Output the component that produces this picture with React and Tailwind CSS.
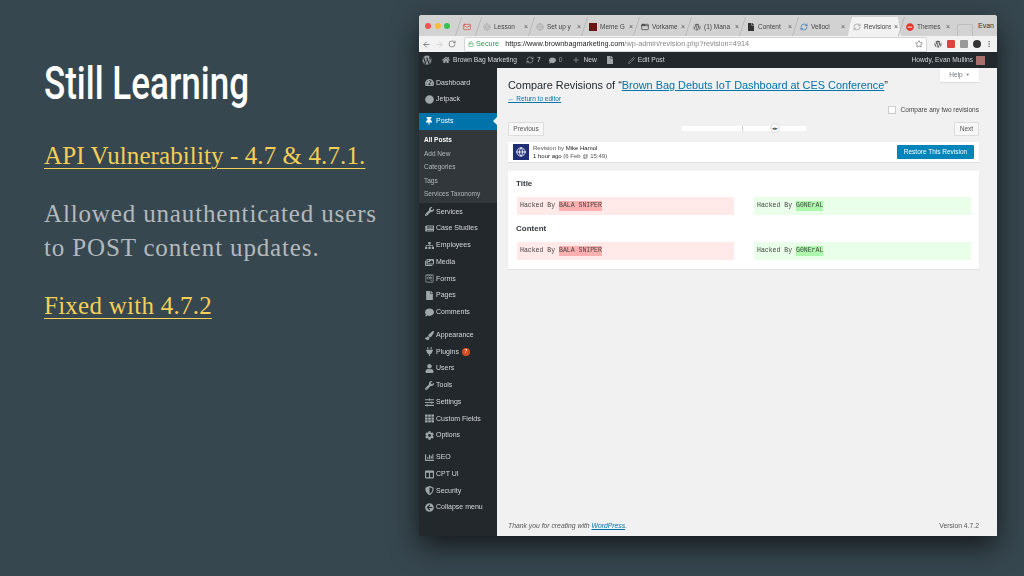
import React from "react";
import { ArrowLeft, ArrowRight, RotateCw, Lock, Star, MoreVertical, Mail, Globe, AppWindow, RefreshCw, Plus, Pencil } from "lucide-react";
import { FaWordpress, FaTachometerAlt, FaThumbtack, FaWrench, FaImages, FaFile, FaComment, FaPaintBrush, FaPlug, FaUser, FaCog, FaHome, FaNewspaper, FaSitemap, FaWpforms, FaSlidersH, FaTh, FaShieldAlt, FaChartBar, FaColumns, FaArrowCircleLeft, FaCircle, FaMinusCircle } from "react-icons/fa";

const tabs = [
  { w: "w-[20px]", color: "text-[#d9453a]", I: Mail },
  { w: "w-[53px]", label: "Lesson", color: "text-[#a9a9a9]", I: Globe },
  { w: "w-[53px]", label: "Set up y", color: "text-[#a9a9a9]", I: Globe },
  { w: "w-[52px]", label: "Meme G", box: true },
  { w: "w-[52px]", label: "Vorkame", color: "text-[#333]", I: AppWindow },
  { w: "w-[54px]", label: "(1) Mana", color: "text-[#666]", I: FaWordpress },
  { w: "w-[53px]", label: "Content", color: "text-[#333]", I: FaFile },
  { w: "w-[53px]", label: "Velloci", color: "text-[#2a6fb5]", I: RefreshCw },
  { w: "w-[53px]", label: "Revisions", color: "text-[#999]", I: RefreshCw, active: true },
  { w: "w-[52px]", label: "Themes", color: "text-[#e5352b]", I: FaMinusCircle },
];

const groups = [
  { mt: "mt-[6.5px]", items: [["Dashboard", FaTachometerAlt], ["Jetpack", FaCircle]] },
  { posts: true },
  { mt: "mt-[0.5px]", items: [["Services", FaWrench], ["Case Studies", FaNewspaper], ["Employees", FaSitemap], ["Media", FaImages], ["Forms", FaWpforms], ["Pages", FaFile], ["Comments", FaComment]] },
  { mt: "mt-[6px]", items: [["Appearance", FaPaintBrush], ["Plugins", FaPlug, true], ["Users", FaUser], ["Tools", FaWrench], ["Settings", FaSlidersH], ["Custom Fields", FaTh], ["Options", FaCog]] },
  { mt: "mt-[5px]", items: [["SEO", FaChartBar], ["CPT UI", FaColumns], ["Security", FaShieldAlt], ["Collapse menu", FaArrowCircleLeft]] },
];

function Row({ label, I, badge }) {
  return (
    <div className="flex h-[16.75px] items-center text-[7px] font-medium text-[#d5d8da]">
      <span className="flex w-[17px] justify-center pl-[3px] text-[#a0a5aa]"><I size={9} /></span>
      <span className="whitespace-nowrap">{label}</span>
      {badge && <span className="ml-[3px] flex h-[8px] w-[8px] items-center justify-center rounded-full bg-[#d54e21] text-[5px] text-white">7</span>}
    </div>
  );
}

function Diff({ add }) {
  return (
    <div className={`flex h-[18px] w-[217px] items-center pl-[3px] font-['Liberation_Mono',monospace] text-[6.5px] text-[#444] ${add ? "bg-[#e9ffe9]" : "bg-[#ffe9e9]"}`}>
      <span>Hacked By&nbsp;</span>
      <span className={add ? "bg-[#adf8ad]" : "bg-[#fdb0b0]"}>{add ? "G0NErAL" : "BALA SNIPER"}</span>
    </div>
  );
}

function Tab({ t }) {
  const I = t.I;
  return (
    <div className={`relative flex h-[19px] shrink-0 items-center gap-[3px] pl-[5px] pr-[3px] ${t.w} ${t.active ? "bg-[#f2f2f2] [clip-path:polygon(0_100%,6%_0,94%_0,100%_100%)]" : ""}`}>
      <span className="absolute left-0 top-0 h-full w-px -skew-x-[18deg] bg-[#b8b8b8]" />
      {t.box ? <span className="h-[8px] w-[8px] shrink-0 bg-[#6b1414]" /> : <I size={8} className={`shrink-0 ${t.color}`} />}
      {t.label && <span className="min-w-0 flex-1 overflow-hidden whitespace-nowrap text-[6.5px] text-[#444]">{t.label}</span>}
      {t.label && <span className="shrink-0 text-[7px] leading-none text-[#555]">×</span>}
    </div>
  );
}

export default function App() {
  return (
    <div className="flex h-[576px] w-[1024px] overflow-hidden bg-[#37474f]">
      <div className="w-[419px] shrink-0 pl-[44px] pr-[20px] pt-[57px]">
        <h1 className="origin-left scale-x-[0.745] whitespace-nowrap font-['Roboto',sans-serif] text-[47px] font-medium leading-[52px] text-white">Still Learning</h1>
        <div className="mt-[30px] font-['Liberation_Serif',serif] text-[25px] leading-[34px]">
          <p className="whitespace-nowrap tracking-[0.1px] text-[#f5cf56] underline decoration-1 underline-offset-[4px]">API Vulnerability - 4.7 &amp; 4.7.1.</p>
          <p className="mt-[23.5px] tracking-[0.85px] text-[#b4b9bd]">Allowed unauthenticated users<br />to POST content updates.</p>
          <p className="mt-[24.5px] whitespace-nowrap tracking-[0.25px] text-[#f5cf56] underline decoration-1 underline-offset-[4px]">Fixed with 4.7.2</p>
        </div>
      </div>

      <div className="mt-[15px] flex h-[521px] w-[578px] shrink-0 flex-col overflow-hidden rounded-t-[3px] bg-[#f1f1f1] font-['Liberation_Sans',sans-serif] shadow-[0_10px_28px_rgba(0,0,0,0.65)] blur-[0.4px]">
        {/* tab strip */}
        <div className="flex h-[21px] shrink-0 items-end bg-[#d2d2d2]">
          <div className="flex h-full w-[39px] shrink-0 items-center gap-[3.5px] pl-[6px]">
            <span className="h-[6px] w-[6px] rounded-full bg-[#f0524f]" />
            <span className="h-[6px] w-[6px] rounded-full bg-[#f6bb38]" />
            <span className="h-[6px] w-[6px] rounded-full bg-[#35c24a]" />
          </div>
          {tabs.map((t, i) => <Tab key={i} t={t} />)}
          <div className="ml-[4px] h-[12px] w-[16px] shrink-0 self-end rounded-t-[2px] border border-b-0 border-[#bdbdbd]" />
          <span className="mb-[5px] ml-[5px] text-[7px] text-[#333]">Evan</span>
        </div>
        {/* url bar */}
        <div className="flex h-[16px] shrink-0 items-center bg-[#f2f2f2] pl-[3px] pr-[4px]">
          <ArrowLeft size={9} className="text-[#666]" />
          <ArrowRight size={9} className="ml-[4px] text-[#ccc]" />
          <RotateCw size={8} className="ml-[4px] text-[#666]" />
          <div className="ml-[9px] flex h-[13px] flex-1 items-center rounded-[1px] bg-white pl-[3px] pr-[3px] text-[7.3px] shadow-[0_0_0_1px_#d5d5d5]">
            <Lock size={6} className="text-[#2a9a4a]" />
            <span className="ml-[2px] text-[#2a9a4a]">Secure</span>
            <span className="ml-[6px] whitespace-nowrap text-[#222]">https://www.brownbagmarketing.com<span className="text-[#888]">/wp-admin/revision.php?revision=4914</span></span>
            <Star size={8} className="ml-auto text-[#666]" />
          </div>
          <FaWordpress size={8} className="ml-[8px] text-[#555]" />
          <span className="ml-[5px] h-[8px] w-[8px] rounded-[1px] bg-[#d9453a]" />
          <span className="ml-[5px] h-[8px] w-[8px] rounded-[1px] bg-[#999]" />
          <span className="ml-[5px] h-[8px] w-[8px] rounded-full bg-[#333]" />
          <MoreVertical size={8} className="ml-[4px] text-[#666]" />
        </div>
        {/* admin bar */}
        <div className="flex h-[16px] shrink-0 items-center bg-[#23282d] pl-[3px] pr-[12px] text-[6.7px] font-medium text-[#d5d8da]">
          <FaWordpress size={10} className="text-[#a0a5aa]" />
          <FaHome size={8} className="ml-[10px] text-[#a0a5aa]" />
          <span className="ml-[3px]">Brown Bag Marketing</span>
          <RefreshCw size={8} className="ml-[9px] text-[#a0a5aa]" />
          <span className="ml-[3px]">7</span>
          <FaComment size={7} className="ml-[8px] text-[#a0a5aa]" />
          <span className="ml-[3px] text-[#8f959a]">0</span>
          <Plus size={8} className="ml-[10px] text-[#a0a5aa]" />
          <span className="ml-[3px]">New</span>
          <FaFile size={8} className="ml-[9px] text-[#a0a5aa]" />
          <Pencil size={7} className="ml-[14px] text-[#a0a5aa]" />
          <span className="ml-[3px]">Edit Post</span>
          <span className="ml-auto">Howdy, Evan Mullins</span>
          <span className="ml-[3px] h-[9px] w-[9px] bg-[#a8706a]" />
        </div>

        <div className="flex min-h-0 flex-1">
          {/* sidebar */}
          <aside className="w-[78px] shrink-0 bg-[#23282d]">
            {groups.map((g, i) =>
              g.posts ? (
                <div key={i} className="mt-[4.5px]">
                  <div className="relative flex h-[17px] items-center bg-[#0073aa] text-[7px] text-white">
                    <span className="flex w-[17px] justify-center pl-[3px]"><FaThumbtack size={8} /></span>
                    <span className="font-medium">Posts</span>
                    <span className="absolute right-0 top-[4px] h-0 w-0 border-y-[4px] border-r-[4px] border-y-transparent border-r-[#f1f1f1]" />
                  </div>
                  <div className="bg-[#32373c] pb-[2px] pl-[5px] pt-[4px] text-[6.5px] text-[#b4b9be]">
                    {["All Posts", "Add New", "Categories", "Tags", "Services Taxonomy"].map((s, k) => (
                      <div key={s} className={`flex h-[13.5px] items-center whitespace-nowrap ${k === 0 ? "font-bold text-white" : ""}`}>{s}</div>
                    ))}
                  </div>
                </div>
              ) : (
                <div key={i} className={g.mt}>
                  {g.items.map(([l, I, b]) => <Row key={l} label={l} I={I} badge={b} />)}
                </div>
              )
            )}
          </aside>

          {/* content */}
          <main className="relative flex min-w-0 flex-1 flex-col pl-[11px] pr-[18px]">
            <div className="absolute right-[18px] top-0 flex h-[14px] w-[39px] items-center justify-center gap-[3px] bg-white text-[6.5px] text-[#72777c] shadow-[0_1px_1px_rgba(0,0,0,0.08)]">Help <span className="text-[4px]">▼</span></div>
            <h2 className="mt-[9px] whitespace-nowrap text-[10.9px] leading-[17px] text-[#23282d]">Compare Revisions of “<span className="text-[#0073aa] underline">Brown Bag Debuts IoT Dashboard at CES Conference</span>”</h2>
            <a className="text-[6.5px] leading-[9px] text-[#0073aa] underline">← Return to editor</a>
            <div className="mt-[1px] flex h-[12px] items-center justify-end gap-[5px] text-[6.5px] text-[#444]">
              <span className="h-[8px] w-[8px] border border-[#ccc] bg-white" />
              <span>Compare any two revisions</span>
            </div>
            <div className="relative mt-[6px] flex h-[14px] items-center justify-between text-[6.5px] text-[#555]">
              <span className="flex h-[14px] w-[36px] items-center justify-center rounded-[1px] border border-[#ddd] bg-[#f7f7f7]">Previous</span>
              <span className="flex h-[14px] w-[25px] items-center justify-center rounded-[1px] border border-[#ddd] bg-[#f7f7f7]">Next</span>
              <div className="absolute left-[174px] top-[4px] h-[5px] w-[124px] bg-white">
                <span className="absolute left-[60px] top-0 h-full w-px bg-[#ccc]" />
                <span className="absolute left-[88px] top-[-3px] h-[10px] w-[10px] rounded-full border border-[#ddd] bg-[#f7f7f7] text-center text-[5px] leading-[8px] text-[#444]">◂▸</span>
              </div>
            </div>
            <div className="mt-[6px] flex h-[20px] items-center bg-white pl-[5px] pr-[5px] shadow-[0_1px_1px_rgba(0,0,0,0.06)]">
              <span className="flex h-[16px] w-[16px] items-center justify-center bg-[#1f2f73]"><Globe size={10} className="text-white" /></span>
              <div className="ml-[4px] text-[6px] leading-[8px] text-[#555]">
                <div>Revision by <span className="text-[#222]">Mike Hamol</span></div>
                <div><span className="text-[#222]">1 hour ago</span> (6 Feb @ 15:49)</div>
              </div>
              <span className="ml-auto flex h-[14px] w-[77px] items-center justify-center rounded-[1px] bg-[#0085ba] text-[6.5px] font-medium text-white">Restore This Revision</span>
            </div>
            <div className="mt-[9px] h-[98px] bg-white px-[8px] shadow-[0_1px_1px_rgba(0,0,0,0.06)]">
              <h3 className="pt-[7px] text-[8px] font-bold leading-[11px] text-[#32373c]">Title</h3>
              <div className="mt-[8px] flex justify-between pl-[1px]"><Diff /><Diff add /></div>
              <h3 className="mt-[8px] text-[8px] font-bold leading-[11px] text-[#32373c]">Content</h3>
              <div className="mt-[8px] flex justify-between pl-[1px]"><Diff /><Diff add /></div>
            </div>
            <div className="mt-auto flex h-[19px] items-center justify-between text-[6.8px] text-[#555]">
              <span className="italic">Thank you for creating with <span className="text-[#0073aa] underline">WordPress</span>.</span>
              <span>Version 4.7.2</span>
            </div>
          </main>
        </div>
      </div>
    </div>
  );
}
